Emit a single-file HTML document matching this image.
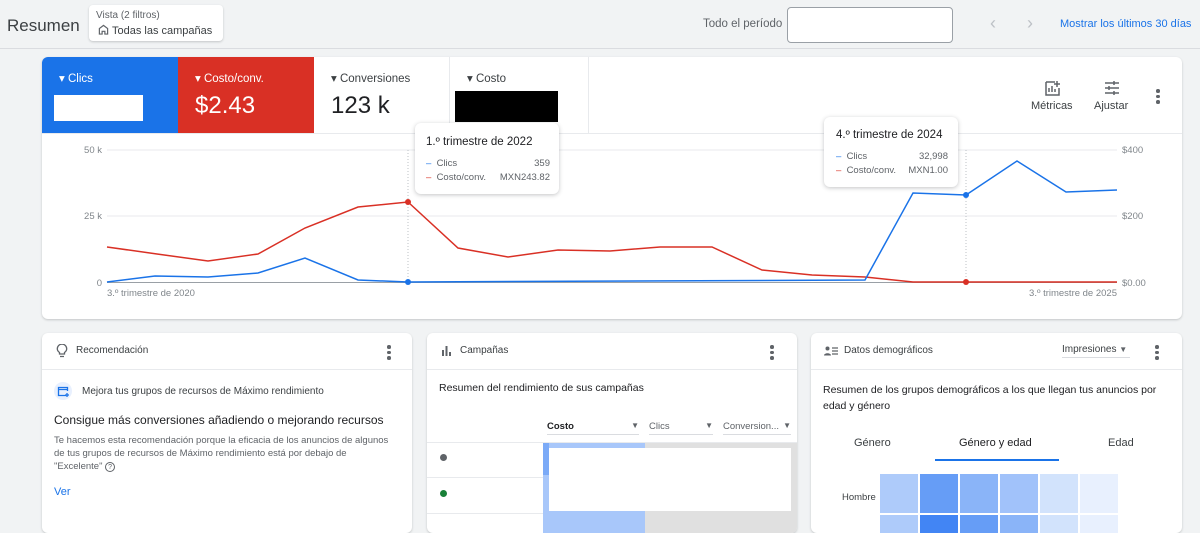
<!DOCTYPE html>
<html><head><meta charset="utf-8"><style>
*{box-sizing:border-box;margin:0;padding:0}
body{width:1200px;height:516px;overflow:hidden;background:#f1f3f4;font-family:"Liberation Sans",sans-serif;color:#202124;position:relative}
.a{position:absolute;white-space:nowrap}
.w{white-space:normal}
.card{position:absolute;background:#fff;border-radius:6px;box-shadow:0 1px 2px rgba(60,64,67,.25)}
.t{font-size:12px;color:#3c4043}
.dots{position:absolute;width:4px}
.dots i{display:block;width:3.5px;height:3.5px;border-radius:50%;background:#5f6368;margin-bottom:2px}
</style></head><body>
<div class="a" style="left:7px;top:16px;font-size:17px;color:#3c4043">Resumen</div>
<div class="card" style="left:89px;top:5px;width:134px;height:36px;border-radius:4px">
 <div class="a" style="left:7px;top:5px;font-size:10px;color:#5f6368">Vista (2 filtros)</div>
 <div class="a" style="left:9px;top:19px;font-size:11px;color:#3c4043"><svg width="11" height="11" viewBox="0 0 12 12" style="vertical-align:-1px;margin-right:3px"><path d="M1.5 11V5L6 1.5 10.5 5V11H7.5V8H4.5V11Z" fill="none" stroke="#5f6368" stroke-width="1.3"/></svg>Todas las campañas</div>
</div>
<div class="a" style="left:0;top:48px;width:1200px;height:1px;background:#dadce0"></div>
<div class="a" style="left:703px;top:18px;font-size:11.5px;color:#5f6368">Todo el período</div>
<div class="a" style="left:787px;top:7px;width:166px;height:36px;border:1px solid #9aa0a6;border-radius:4px;background:#fff"></div>
<div class="a" style="left:990px;top:13px;font-size:18px;color:#bdc1c6">&#8249;</div>
<div class="a" style="left:1027px;top:13px;font-size:18px;color:#bdc1c6">&#8250;</div>
<div class="a" style="left:1060px;top:18px;font-size:11px;color:#1a73e8">Mostrar los últimos 30 días</div>

<div class="card" style="left:42px;top:57px;width:1140px;height:262px;overflow:hidden">
 <div class="a" style="left:0;top:0;width:136px;height:76px;background:#1a73e8">
  <div class="a" style="left:17px;top:14px;color:#fff;font-size:11.5px">&#9662; Clics</div>
  <div class="a" style="left:12px;top:38px;width:89px;height:26px;background:#fff"></div>
 </div>
 <div class="a" style="left:136px;top:0;width:136px;height:76px;background:#d93025">
  <div class="a" style="left:17px;top:14px;color:#fff;font-size:11.5px">&#9662; Costo/conv.</div>
  <div class="a" style="left:17px;top:35px;color:#fff;font-size:24px">$2.43</div>
 </div>
 <div class="a" style="left:272px;top:0;width:136px;height:76px;border-right:1px solid #e8eaed">
  <div class="a" style="left:17px;top:14px;color:#3c4043;font-size:11.5px">&#9662; Conversiones</div>
  <div class="a" style="left:17px;top:35px;color:#202124;font-size:24px">123 k</div>
 </div>
 <div class="a" style="left:408px;top:0;width:139px;height:76px;border-right:1px solid #e8eaed">
  <div class="a" style="left:17px;top:14px;color:#3c4043;font-size:11.5px">&#9662; Costo</div>
  <div class="a" style="left:5px;top:34px;width:103px;height:31px;background:#000"></div>
 </div>
 <div class="a" style="left:0;top:76px;width:1140px;height:1px;background:#e8eaed"></div>
 <svg class="a" style="left:1002px;top:22px" width="18" height="18" viewBox="0 0 18 18"><path d="M2 3h9M2 3v13h13V9M5 13V9M8 13V7M11 13v-3M13 2v6M10 5h6" fill="none" stroke="#5f6368" stroke-width="1.5"/></svg>
 <div class="a t" style="left:989px;top:43px;font-size:11px">Métricas</div>
 <svg class="a" style="left:1061px;top:22px" width="18" height="18" viewBox="0 0 18 18"><path d="M2 4h14M2 9h14M2 14h14M11 2v4M6 7v4M11 12v4" fill="none" stroke="#5f6368" stroke-width="1.5"/></svg>
 <div class="a t" style="left:1052px;top:43px;font-size:11px">Ajustar</div>
 <div class="dots" style="left:1114px;top:32px"><i></i><i></i><i></i></div>
</div>

<svg class="a" style="left:0;top:0" width="1200" height="320">
 <g stroke="#e8eaed" stroke-width="1"><line x1="107" y1="150" x2="1117" y2="150"/><line x1="107" y1="216" x2="1117" y2="216"/></g>
 <line x1="107" y1="282.5" x2="1117" y2="282.5" stroke="#9aa0a6"/>
 <g stroke="#bdc1c6" stroke-dasharray="1,2"><line x1="408" y1="150" x2="408" y2="282"/><line x1="966" y1="150" x2="966" y2="282"/></g>
 <g font-family="Liberation Sans" font-size="9.5" fill="#80868b">
  <text x="102" y="153" text-anchor="end">50 k</text><text x="102" y="219" text-anchor="end">25 k</text><text x="102" y="286" text-anchor="end">0</text>
  <text x="1122" y="153">$400</text><text x="1122" y="219">$200</text><text x="1122" y="286">$0.00</text>
  <text x="107" y="296">3.º trimestre de 2020</text><text x="1117" y="296" text-anchor="end">3.º trimestre de 2025</text>
 </g>
 <polyline fill="none" stroke="#d93025" stroke-width="1.5" points="107,247 157,254 208,261 258,254 305,228 358,207 408,202 458,248 508,257 558,250 610,251 660,247 712,247 762,270 812,275 865,277 913,282 966,282 1117,282"/>
 <polyline fill="none" stroke="#1a73e8" stroke-width="1.5" points="107,282 155,276 208,277 258,273 305,258 358,280 408,282 865,280 913,193 966,195 1017,161 1066,192 1117,190"/>
 <circle cx="408" cy="202" r="3" fill="#d93025"/><circle cx="408" cy="282" r="3" fill="#1a73e8"/>
 <circle cx="966" cy="195" r="3" fill="#1a73e8"/><circle cx="966" cy="282" r="3" fill="#d93025"/>
</svg>

<div class="card" style="left:415px;top:123px;width:144px;height:71px;box-shadow:0 1px 4px rgba(60,64,67,.3)">
 <div class="a" style="left:11px;top:13px;font-size:11.5px;color:#202124">1.º trimestre de 2022</div>
 <div class="a" style="left:11px;top:35px;font-size:9.5px;color:#5f6368;width:124px"><span style="color:#1a73e8">–</span>&nbsp; Clics<span style="float:right">359</span></div>
 <div class="a" style="left:11px;top:49px;font-size:9.5px;color:#5f6368;width:124px"><span style="color:#d93025">–</span>&nbsp; Costo/conv.<span style="float:right">MXN243.82</span></div>
</div>
<div class="card" style="left:824px;top:117px;width:134px;height:70px;box-shadow:0 1px 4px rgba(60,64,67,.3)">
 <div class="a" style="left:12px;top:12px;font-size:11.5px;color:#202124">4.º trimestre de 2024</div>
 <div class="a" style="left:12px;top:34px;font-size:9.5px;color:#5f6368;width:112px"><span style="color:#1a73e8">–</span>&nbsp; Clics<span style="float:right">32,998</span></div>
 <div class="a" style="left:12px;top:48px;font-size:9.5px;color:#5f6368;width:112px"><span style="color:#d93025">–</span>&nbsp; Costo/conv.<span style="float:right">MXN1.00</span></div>
</div>

<div class="card" style="left:42px;top:333px;width:370px;height:200px">
 <svg class="a" style="left:14px;top:11px" width="12" height="14" viewBox="0 0 12 14"><path d="M3.5 10V8.5C2 7.5 1.3 6.2 1.3 4.8A4.7 4.7 0 0 1 10.7 4.8C10.7 6.2 10 7.5 8.5 8.5V10ZM4 12.5h4" fill="none" stroke="#5f6368" stroke-width="1.3"/></svg>
 <div class="a" style="left:34px;top:12px;font-size:10px;color:#3c4043">Recomendación</div>
 <div class="dots" style="left:345px;top:12px"><i></i><i></i><i></i></div>
 <div class="a" style="left:0;top:36px;width:370px;height:1px;background:#e8eaed"></div>
 <div class="a" style="left:12px;top:49px;width:18px;height:18px;border-radius:50%;background:#e8f0fe"></div>
 <svg class="a" style="left:15px;top:53px" width="13" height="11" viewBox="0 0 13 11"><path d="M9 9.5H1.5V1.5h9V5M1.5 3.5h9M10 7v4M8 9h4" fill="none" stroke="#1a73e8" stroke-width="1.3"/></svg>
 <div class="a" style="left:40px;top:53px;font-size:10px;color:#3c4043">Mejora tus grupos de recursos de Máximo rendimiento</div>
 <div class="a" style="left:12px;top:80px;font-size:12px;color:#202124">Consigue más conversiones añadiendo o mejorando recursos</div>
 <div class="a w" style="left:12px;top:101px;width:335px;font-size:9.5px;line-height:13px;color:#5f6368">Te hacemos esta recomendación porque la eficacia de los anuncios de algunos de tus grupos de recursos de Máximo rendimiento está por debajo de "Excelente" <span style="display:inline-block;width:10px;height:10px;border:1px solid #5f6368;border-radius:50%;font-size:7px;text-align:center;line-height:9px">?</span></div>
 <div class="a" style="left:12px;top:153px;font-size:11px;color:#1a73e8">Ver</div>
</div>

<div class="card" style="left:427px;top:333px;width:370px;height:200px;overflow:hidden">
 <svg class="a" style="left:14px;top:13px" width="11" height="10" viewBox="0 0 11 10"><path d="M1 4h2v6H1zM4.5 0h2v10h-2zM8 6h2v4H8z" fill="#5f6368"/></svg>
 <div class="a" style="left:33px;top:12px;font-size:10px;color:#3c4043">Campañas</div>
 <div class="dots" style="left:343px;top:12px"><i></i><i></i><i></i></div>
 <div class="a" style="left:0;top:36px;width:370px;height:1px;background:#e8eaed"></div>
 <div class="a" style="left:12px;top:49px;font-size:10.5px;color:#202124">Resumen del rendimiento de sus campañas</div>
 <div class="a" style="left:120px;top:88px;width:92px;border-bottom:1px solid #dadce0;font-size:9.5px;font-weight:bold;color:#202124;padding-bottom:2px">Costo<span style="float:right;font-size:8px;color:#5f6368">&#9660;</span></div>
 <div class="a" style="left:222px;top:88px;width:64px;border-bottom:1px solid #dadce0;font-size:9.5px;color:#5f6368;padding-bottom:2px">Clics<span style="float:right;font-size:8px">&#9660;</span></div>
 <div class="a" style="left:296px;top:88px;width:68px;border-bottom:1px solid #dadce0;font-size:9.5px;color:#5f6368;padding-bottom:2px">Conversion...<span style="float:right;font-size:8px">&#9660;</span></div>
 <div class="a" style="left:0;top:109px;width:370px;height:1px;background:#e8eaed"></div>
 <div class="a" style="left:0;top:144px;width:370px;height:1px;background:#e8eaed"></div>
 <div class="a" style="left:0;top:180px;width:370px;height:1px;background:#e8eaed"></div>
 <div class="a" style="left:13px;top:121px;width:7px;height:7px;border-radius:50%;background:#5f6368"></div>
 <div class="a" style="left:13px;top:157px;width:7px;height:7px;border-radius:50%;background:#188038"></div>
 <div class="a" style="left:116px;top:110px;width:254px;height:90px;background:#e0e0e0"></div>
 <div class="a" style="left:116px;top:110px;width:102px;height:90px;background:#a8c7fa"></div>
 <div class="a" style="left:116px;top:110px;width:6px;height:32px;background:#7baaf7"></div>
 <div class="a" style="left:122px;top:115px;width:242px;height:63px;background:#fff"></div>
</div>

<div class="card" style="left:811px;top:333px;width:371px;height:200px;overflow:hidden">
 <svg class="a" style="left:13px;top:13px" width="14" height="10" viewBox="0 0 14 10"><circle cx="3.5" cy="2.5" r="2" fill="#5f6368"/><path d="M0 9.5C0 6.5 7 6.5 7 9.5Z" fill="#5f6368"/><path d="M8 2h6M8 5h6M8 8h6" stroke="#5f6368" stroke-width="1.2"/></svg>
 <div class="a" style="left:33px;top:12px;font-size:10px;color:#3c4043">Datos demográficos</div>
 <div class="a" style="left:251px;top:11px;width:68px;border-bottom:1px solid #dadce0;font-size:10px;color:#3c4043;padding-bottom:2px">Impresiones <span style="font-size:8px;color:#5f6368">&#9660;</span></div>
 <div class="dots" style="left:344px;top:12px"><i></i><i></i><i></i></div>
 <div class="a" style="left:0;top:36px;width:371px;height:1px;background:#e8eaed"></div>
 <div class="a w" style="left:12px;top:49px;width:340px;font-size:10.5px;line-height:16px;color:#202124">Resumen de los grupos demográficos a los que llegan tus anuncios por edad y género</div>
 <div class="a" style="left:43px;top:104px;font-size:11px;color:#3c4043">Género</div>
 <div class="a" style="left:148px;top:104px;font-size:11px;color:#202124">Género y edad</div>
 <div class="a" style="left:297px;top:104px;font-size:11px;color:#3c4043">Edad</div>
 <div class="a" style="left:124px;top:126px;width:124px;height:2px;background:#1a73e8"></div>
 <div class="a" style="left:31px;top:159px;font-size:9.5px;color:#3c4043">Hombre</div>
 <div class="a" style="left:69px;top:141px;display:flex;gap:2px">
  <div style="width:38px;height:39px;background:#aecbfa"></div><div style="width:38px;height:39px;background:#669df6"></div><div style="width:38px;height:39px;background:#8ab4f8"></div><div style="width:38px;height:39px;background:#a1c2fa"></div><div style="width:38px;height:39px;background:#d2e3fc"></div><div style="width:38px;height:39px;background:#e8f0fe"></div>
 </div>
 <div class="a" style="left:69px;top:182px;display:flex;gap:2px">
  <div style="width:38px;height:20px;background:#aecbfa"></div><div style="width:38px;height:20px;background:#4285f4"></div><div style="width:38px;height:20px;background:#669df6"></div><div style="width:38px;height:20px;background:#8ab4f8"></div><div style="width:38px;height:20px;background:#d2e3fc"></div><div style="width:38px;height:20px;background:#e8f0fe"></div>
 </div>
</div>
</body></html>
